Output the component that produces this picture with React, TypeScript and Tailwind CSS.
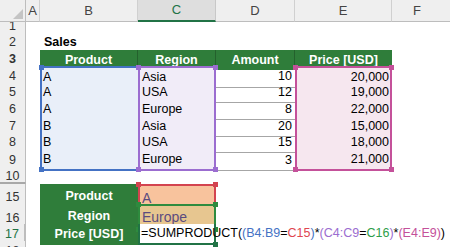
import React from "react";

const GRID = "grid grid-cols-[26px_14px_98px_78px_79px_97px_1fr]";
const FONT = "font-['Liberation_Sans',Arial,sans-serif]";

const data: [string, string, number, string][] = [
  ["A", "Asia", 10, "20,000"],
  ["A", "USA", 12, "19,000"],
  ["A", "Europe", 8, "22,000"],
  ["B", "Asia", 20, "15,000"],
  ["B", "USA", 15, "18,000"],
  ["B", "Europe", 3, "21,000"],
];

const bodyHeights = ["h-[17px]", "h-[17px]", "h-[17px]", "h-[16px]", "h-[17px]", "h-[17px]"];

function Handle({ pos, color }: { pos: string; color: string }) {
  return <span className={`absolute z-10 w-[5px] h-[5px] ${pos} ${color}`} />;
}

function RowHead({ n, className = "" }: { n: string; className?: string }) {
  return (
    <div
      className={`flex items-center justify-center border-r border-b border-[#d0d0d0] border-r-[#bdbdbd] bg-[#efefef] text-[12.5px] text-[#333] ${className}`}
    >
      {n}
    </div>
  );
}

function Empty() {
  return <div />;
}

export default function App() {
  return (
    <div className={`w-[450px] h-[247px] overflow-hidden bg-white text-black ${FONT}`}>
      {/* column headers */}
      <div className={`${GRID} h-[17px] text-[13px] text-[#444]`}>
        <div className="relative bg-[#efefef] border-r border-b border-[#bdbdbd]">
          <svg className="absolute right-[2px] bottom-[2px]" width="10" height="10" viewBox="0 0 10 10">
            <polygon points="10,0 10,10 0,10" fill="#c4c4c4" />
          </svg>
        </div>
        <div className="flex items-center justify-center bg-[#efefef] border-r border-b border-[#d0d0d0] border-b-[#bdbdbd]">A</div>
        <div className="flex items-center justify-center bg-[#efefef] border-r border-b border-[#d0d0d0] border-b-[#bdbdbd]">B</div>
        <div className="flex items-center justify-center bg-[#dedede] border-r border-[#c8c8c8] border-b-2 border-b-[#217346] text-[#217346]">C</div>
        <div className="flex items-center justify-center bg-[#efefef] border-r border-b border-[#d0d0d0] border-b-[#bdbdbd]">D</div>
        <div className="flex items-center justify-center bg-[#efefef] border-r border-b border-[#d0d0d0] border-b-[#bdbdbd]">E</div>
        <div className="flex items-center justify-center bg-[#efefef] border-b border-[#bdbdbd] pr-[8px]">F</div>
      </div>

      {/* row 1 */}
      <div className={`${GRID} h-[16px]`}>
        <RowHead n="1" className="bg-[#a6d8bb] text-[#1d5a32]" />
      </div>

      {/* row 2 */}
      <div className={`${GRID} h-[17px] text-[12.5px]`}>
        <RowHead n="2" />
        <Empty />
        <div className="flex items-end pb-[1px] pl-[4px] font-bold whitespace-nowrap">Sales</div>
      </div>

      {/* row 3 header */}
      <div className={`${GRID} h-[16px] text-[12.5px] font-bold text-white`}>
        <RowHead n="3" />
        <Empty />
        <div className="flex items-center justify-center bg-[#2f7d3a] border-r border-[#24612d]">Product</div>
        <div className="flex items-center justify-center bg-[#2f7d3a] border-r border-[#24612d]">Region</div>
        <div className="flex items-center justify-center bg-[#2f7d3a] border-r border-[#24612d]">Amount</div>
        <div className="flex items-center justify-center bg-[#2f7d3a]">Price [USD]</div>
      </div>

      {/* rows 4-9 */}
      {data.map(([prod, region, amount, price], i) => {
        const first = i === 0;
        const last = i === data.length - 1;
        return (
          <div key={i} className={`${GRID} ${bodyHeights[i]} text-[12.5px]`}>
            <RowHead n={String(i + 4)} />
            <Empty />
            <div
              className={`relative flex items-center pl-[1px] bg-[#e9eff9] border-l-2 border-l-[#4472c4] ${
                first ? "border-t-2 border-t-[#4472c4]" : ""
              } ${last ? "border-b-2 border-b-[#4472c4]" : "border-b border-b-[#a6a6a6]"}`}
            >
              {first && <Handle pos="-top-[3px] -left-[3px]" color="bg-[#4472c4]" />}
              {last && <Handle pos="-bottom-[3px] -left-[3px]" color="bg-[#4472c4]" />}
              {prod}
            </div>
            <div
              className={`relative flex items-center pl-[2px] bg-[#f1ecf8] border-x-2 border-x-[#9b6dd0] ${
                first ? "border-t-2 border-t-[#9b6dd0]" : ""
              } ${last ? "border-b-2 border-b-[#9b6dd0]" : "border-b border-b-[#a6a6a6]"}`}
            >
              {first && <Handle pos="-top-[3px] -left-[4px]" color="bg-[#9b6dd0]" />}
              {first && <Handle pos="-top-[3px] -right-[4px]" color="bg-[#9b6dd0]" />}
              {last && <Handle pos="-bottom-[3px] -left-[4px]" color="bg-[#9b6dd0]" />}
              {last && <Handle pos="-bottom-[3px] -right-[4px]" color="bg-[#9b6dd0]" />}
              {region}
            </div>
            <div className="flex items-center justify-end pr-[3px] border-b border-b-[#a6a6a6]">{amount}</div>
            <div
              className={`relative flex items-center justify-end pr-[1px] bg-[#f6e7ef] border-x-2 border-x-[#c4519a] ${
                first ? "border-t-2 border-t-[#c4519a]" : ""
              } ${last ? "border-b-2 border-b-[#c4519a]" : "border-b border-b-[#a6a6a6]"}`}
            >
              {first && <Handle pos="-top-[3px] -left-[4px]" color="bg-[#c4519a]" />}
              {first && <Handle pos="-top-[3px] -right-[4px]" color="bg-[#c4519a]" />}
              {last && <Handle pos="-bottom-[3px] -left-[4px]" color="bg-[#c4519a]" />}
              {last && <Handle pos="-bottom-[3px] -right-[4px]" color="bg-[#c4519a]" />}
              {price}
            </div>
          </div>
        );
      })}

      {/* row 10 */}
      <div className={`${GRID} h-[15px]`}>
        <RowHead n="10" className="border-b-0" />
      </div>
      {/* hidden rows 11-14 */}
      <div className={`${GRID} h-[2px]`}>
        <div className="bg-[#efefef] border-y border-[#a8a8a8] border-r border-r-[#bdbdbd]" />
      </div>

      {/* row 15 */}
      <div className={`${GRID} h-[20px]`}>
        <RowHead n="15" className="pt-[3px]" />
        <Empty />
        <div className="flex items-center justify-center bg-[#2f7d3a] border-b border-[#8aa98d] text-[12.5px] font-bold text-white">
          Product
        </div>
        <div className="relative flex items-center pl-[2px] pt-[2px] bg-[#f8c39d] border-x-2 border-t-2 border-[#d3434f] text-[14px] text-[#5b4b7f]">
          <Handle pos="-top-[4px] -left-[4px]" color="bg-[#d3434f]" />
          <Handle pos="-top-[4px] -right-[4px]" color="bg-[#d3434f]" />
          A
        </div>
      </div>

      {/* row 16 */}
      <div className={`${GRID} h-[20px]`}>
        <RowHead n="16" className="pt-[3px]" />
        <Empty />
        <div className="flex items-center justify-center bg-[#2f7d3a] border-b border-[#8aa98d] text-[12.5px] font-bold text-white">
          Region
        </div>
        <div className="relative flex items-center pl-[2px] pt-[1px] bg-[#e7c690] border-2 border-[#2e8b3e] text-[14px] text-[#5b4b7f]">
          <Handle pos="-top-[4px] -left-[4px]" color="bg-[#2e8b3e]" />
          <Handle pos="-top-[4px] -right-[4px]" color="bg-[#2e8b3e]" />
          <Handle pos="-bottom-[4px] -left-[4px]" color="bg-[#2e8b3e]" />
          <Handle pos="-bottom-[4px] -right-[4px]" color="bg-[#2e8b3e]" />
          Europe
        </div>
      </div>

      {/* row 17 */}
      <div className={`${GRID} h-[17px]`}>
        <RowHead n="17" className="bg-[#d6d6d6] border-r-2 border-r-[#217346] text-[#217346]" />
        <Empty />
        <div className="flex items-center justify-center bg-[#2f7d3a] text-[12.5px] font-bold text-white whitespace-nowrap">
          Price [USD]
        </div>
        <div className="relative z-20 flex items-center pl-[1px] bg-white border-x-2 border-b-2 border-[#217346] text-[12.5px] whitespace-nowrap">
          <Handle pos="-bottom-[4px] -right-[4px]" color="bg-[#217346]" />
          <span>
            =SUMPRODUCT(<span className="text-[#4472c4]">(B4:B9</span>=<span className="text-[#e0454f]">C15</span>
            <span className="text-[#4472c4]">)</span>*<span className="text-[#9b6dd0]">(C4:C9</span>=
            <span className="text-[#2e9e4a]">C16</span>
            <span className="text-[#9b6dd0]">)</span>*<span className="text-[#c4519a]">(E4:E9)</span>)
          </span>
          <span className="ml-[1px] inline-block w-[1px] h-[15px] bg-black" />
        </div>
      </div>

      {/* row 18 */}
      <div className={`${GRID} h-[10px]`}>
        <RowHead n="18" className="items-start pt-[1px]" />
      </div>
    </div>
  );
}
